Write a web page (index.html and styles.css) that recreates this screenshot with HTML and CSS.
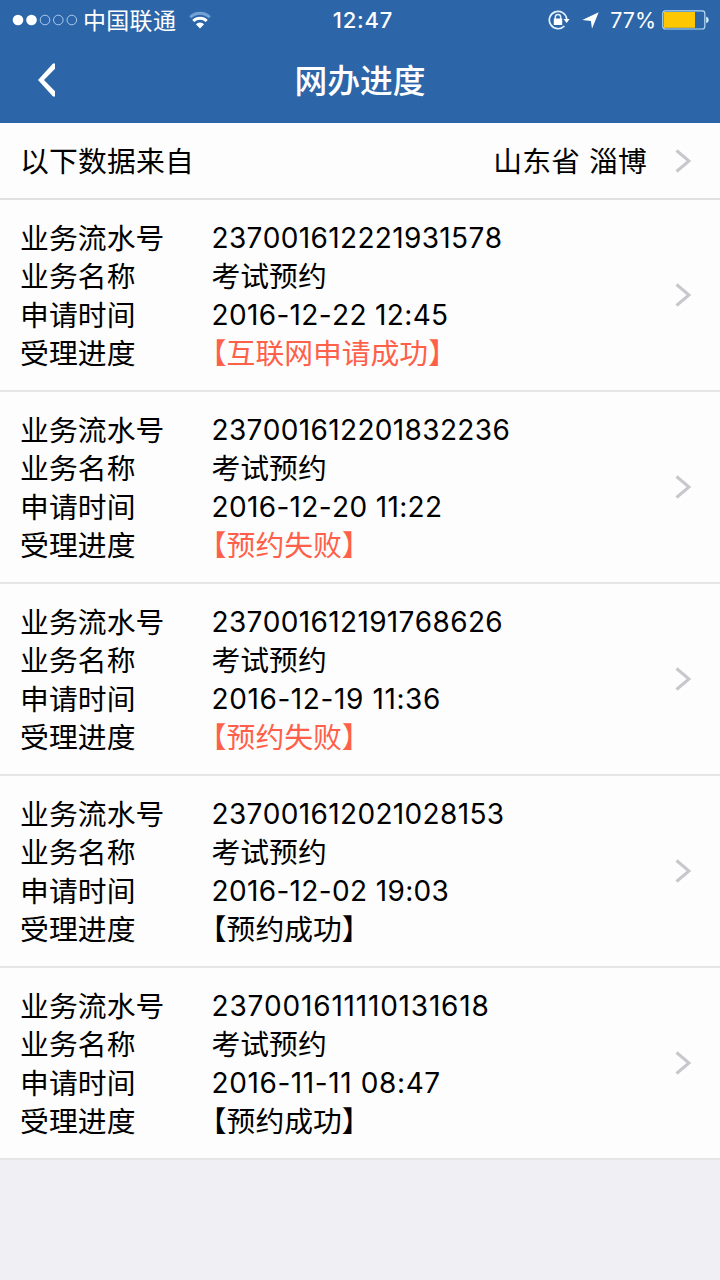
FILE: index.html
```html
<!DOCTYPE html>
<html lang="zh-CN">
<head>
<meta charset="utf-8">
<title>网办进度</title>
<link rel="stylesheet" href="styles.css">
</head>
<body>
<header class="header">
  <div class="status">
    <div class="status-left">
      <svg class="signal" width="66" height="12" viewBox="0 0 66 12"><g fill="#fff"><circle cx="6" cy="6" r="5.3"/><circle cx="19.5" cy="6" r="5.3"/></g><g fill="none" stroke="#a9c9f0" stroke-width="1"><circle cx="33" cy="6" r="4.8"/><circle cx="46.3" cy="6" r="4.8"/><circle cx="59.8" cy="6" r="4.8"/></g></svg>
      <span class="carrier">中国联通</span>
      <svg class="wifi" width="22" height="18" viewBox="0 0 22 18"><g fill="none" stroke-width="3"><path d="M1.2 6.2a14 14 0 0 1 19.6 0" stroke="#73a0d5"/><path d="M4.3 10a9.500 9.500 0 0 1 13.4 0" stroke="#fff"/></g><path d="M6.9 13.2a5.800 5.800 0 0 1 8.2 0L11 17.500z" fill="#fff"/></svg>
    </div>
    <span class="clock">12:47</span>
    <div class="status-right">
      <svg class="lock" width="22" height="20" viewBox="0 0 22 20"><g fill="none" stroke="#e4f2ff" stroke-width="1.7"><path d="M18.700 9A8.700 8.700 0 1 0 16.400 16"/><path d="M7.3 9V7.2a2.7 2.7 0 0 1 5.4 0V9" stroke-width="1.500"/></g><path d="M5.8 8.5h8.4v6.500H5.8zM15.600 9h6l-3 4z" fill="#fff"/></svg>
      <svg class="locate" width="17" height="17" viewBox="0 0 17 17"><path d="M16.700.2 10 16.800 8.900 8.900.3 8z" fill="#fff"/></svg>
      <span class="percent">77%</span>
      <svg class="battery" width="47" height="20" viewBox="0 0 47 20"><rect x=".8" y=".8" width="42" height="18.2" rx="2.5" fill="none" stroke="#b5dcf5" stroke-width="1.2"/><path d="M2 2h31v15.8H2z" fill="#fdc801"/><path d="M44.2 6.5q2.5.8 2.5 3.4t-2.5 3.4z" fill="#d8efff"/></svg>
    </div>
  </div>
  <div class="nav">
    <svg class="back" width="19" height="34" viewBox="0 0 19 34"><path d="M18 .5v5.300L7 17l11 11.200v5.300h-2L1 17 16 .5z" fill="#fff"/></svg>
    <h1 class="title">网办进度</h1>
  </div>
</header>
<main class="list">
  <div class="source"><span>以下数据来自</span><span class="region">山东省 淄博</span><svg class="chevron" width="16" height="24" viewBox="0 0 16 24"><path d="m1.500 1.500 12.500 10.500-12.500 10.500"/></svg></div>
  <section class="record">
    <dl class="fields"><dt>业务流水号</dt><dd class="num">237001612221931578</dd><dt>业务名称</dt><dd>考试预约</dd><dt>申请时间</dt><dd class="num">2016-12-22 12:45</dd><dt>受理进度</dt><dd class="state alert">【互联网申请成功】</dd></dl>
    <svg class="chevron" width="16" height="24" viewBox="0 0 16 24"><path d="m1.500 1.500 12.500 10.500-12.500 10.500"/></svg>
  </section>
  <section class="record">
    <dl class="fields"><dt>业务流水号</dt><dd class="num">237001612201832236</dd><dt>业务名称</dt><dd>考试预约</dd><dt>申请时间</dt><dd class="num">2016-12-20 11:22</dd><dt>受理进度</dt><dd class="state alert">【预约失败】</dd></dl>
    <svg class="chevron" width="16" height="24" viewBox="0 0 16 24"><path d="m1.500 1.500 12.500 10.500-12.500 10.500"/></svg>
  </section>
  <section class="record">
    <dl class="fields"><dt>业务流水号</dt><dd class="num">237001612191768626</dd><dt>业务名称</dt><dd>考试预约</dd><dt>申请时间</dt><dd class="num loose">2016-12-19 11:36</dd><dt>受理进度</dt><dd class="state alert">【预约失败】</dd></dl>
    <svg class="chevron" width="16" height="24" viewBox="0 0 16 24"><path d="m1.500 1.500 12.500 10.500-12.500 10.500"/></svg>
  </section>
  <section class="record">
    <dl class="fields"><dt>业务流水号</dt><dd class="num">237001612021028153</dd><dt>业务名称</dt><dd>考试预约</dd><dt>申请时间</dt><dd class="num">2016-12-02 19:03</dd><dt>受理进度</dt><dd class="state">【预约成功】</dd></dl>
    <svg class="chevron" width="16" height="24" viewBox="0 0 16 24"><path d="m1.500 1.500 12.500 10.500-12.500 10.500"/></svg>
  </section>
  <section class="record">
    <dl class="fields"><dt>业务流水号</dt><dd class="num looser">237001611110131618</dd><dt>业务名称</dt><dd>考试预约</dd><dt>申请时间</dt><dd class="num loose">2016-11-11 08:47</dd><dt>受理进度</dt><dd class="state">【预约成功】</dd></dl>
    <svg class="chevron" width="16" height="24" viewBox="0 0 16 24"><path d="m1.500 1.500 12.500 10.500-12.500 10.500"/></svg>
  </section>
</main>
</body>
</html>
```
FILE: styles.css
```css
* { box-sizing: border-box; }
body {
  margin: 0;
  min-height: 1280px;
  background: #efeff4;
  color: #000;
  font-family: "Noto Sans CJK SC", sans-serif;
  font-size: 28.8px;
  line-height: 38.4px;
}
svg { display: block; flex: none; }
.header { height: 123px; background: #2c66a8; color: #fff; }
.status {
  display: grid;
  grid-template-columns: 1fr auto 1fr;
  align-items: center;
  height: 40px;
  padding: 0 11px 0 12px;
  line-height: 30px;
}
.status-left, .status-right { display: flex; align-items: center; }
.status-right { justify-content: flex-end; }
.carrier { margin-left: 5px; padding-bottom: 2px; font-size: 23px; letter-spacing: .3px; }
.wifi { margin-left: 13px; }
.clock { margin-left: 5px; font: 500 22px/30px Inter, sans-serif; letter-spacing: .8px; }
.locate { margin-left: 12px; }
.percent { margin: 0 6px 0 11px; font: 400 21.5px/30px Inter, sans-serif; }
.nav {
  display: grid;
  grid-template-columns: 60px 1fr 60px;
  align-items: center;
  height: 79px;
}
.back { margin-left: 37px; }
.title { margin: 0; padding-bottom: 1px; font-size: 32.8px; line-height: 48px; font-weight: 500; text-align: center; }
.list { background: #fdfdfd; }
.source {
  display: flex;
  align-items: center;
  height: 77px;
  padding: 0 29px 0 20px;
  border-bottom: 2px solid #e1e1e2;
  letter-spacing: .2px;
}
.region { margin-left: auto; margin-right: 28px; word-spacing: 2px; }
.record {
  display: flex;
  align-items: center;
  justify-content: space-between;
  height: 192px;
  padding: 0 29px 0 20px;
  border-bottom: 2px solid #e5e5e6;
}
.fields { display: grid; grid-template-columns: 191.5px auto; margin: 0; padding-bottom: .4px; }
.fields dt { letter-spacing: .1px; }
.fields dd { margin: 0; white-space: nowrap; }
.fields .num { padding-top: 1px; margin-bottom: -1px; font-family: Inter, sans-serif; font-size: 28px; font-kerning: none; letter-spacing: .35px; }
.fields .loose { letter-spacing: .6px; }
.fields .looser { letter-spacing: .8px; }
.fields .state { padding-left: .7px; font-feature-settings: "halt"; }
.alert { color: #ff604a; }
.chevron path { fill: none; stroke: #c7c7cc; stroke-width: 3; }
```
